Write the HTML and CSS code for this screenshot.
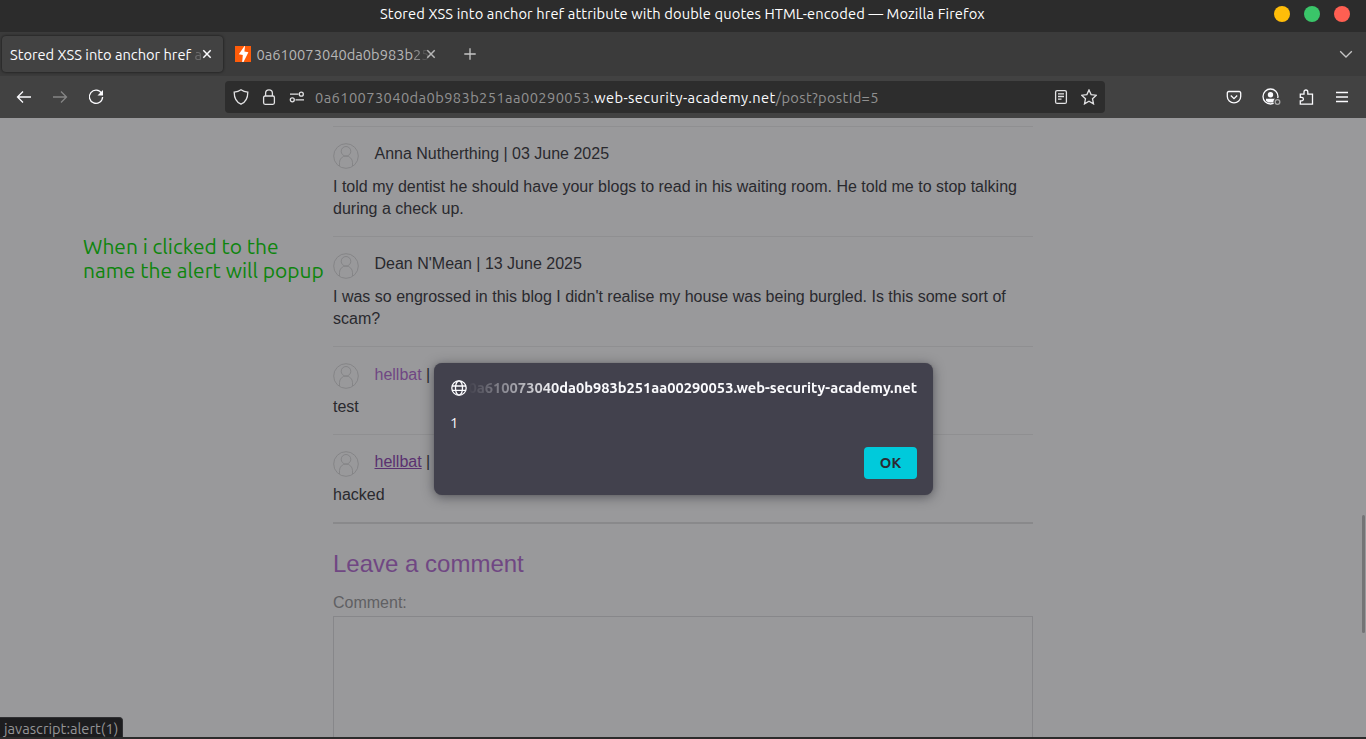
FILE: index.html
```html
<!DOCTYPE html>
<html lang="en">
<head>
<meta charset="utf-8">
<title>Stored XSS into anchor href attribute with double quotes HTML-encoded</title>
<link rel="stylesheet" href="styles.css">
</head>
<body>
<svg class="defs" width="0" height="0" aria-hidden="true">
  <symbol id="avatar" viewBox="0 0 26 26">
    <circle cx="13" cy="13" r="12.3"/>
    <circle cx="13" cy="8.3" r="4.8"/>
    <path d="M6.5 23v-3.5a6.5 6.5 0 0 1 13 0V23"/>
  </symbol>
</svg>
<div class="window">
  <header class="titlebar">
    <span class="window-title">Stored XSS into anchor href attribute with double quotes HTML-encoded — Mozilla Firefox</span>
    <div class="window-buttons"><i class="dot yellow"></i><i class="dot green"></i><i class="dot red"></i></div>
  </header>
  <div class="tabs">
    <div class="tab active">
      <span class="tab-label">Stored XSS into anchor href <span class="fade">a</span></span>
      <svg class="close" viewBox="0 0 10 10"><path d="M1.3 1.3l7.4 7.4M8.7 1.3L1.3 8.7"/></svg>
    </div>
    <div class="tab">
      <svg class="favicon" viewBox="0 0 16 16"><rect width="16" height="16" fill="#ff5c0a"/><path d="M9.500 0L3.800 8.300l4 .6-.6 7.100h1.300l4.900-9.700-4-.8L10 0z" fill="#fff"/></svg>
      <span class="tab-label">0a610073040da0b983b<span class="half">2</span><span class="fade">5</span></span>
      <svg class="close" viewBox="0 0 10 10"><path d="M1.3 1.3l7.4 7.4M8.7 1.3L1.3 8.7"/></svg>
    </div>
    <svg class="new-tab" viewBox="0 0 12 12"><path d="M6 .3v11.4M.3 6h11.4"/></svg>
    <svg class="chevron" viewBox="0 0 14 9"><path d="M1.2 1.3L7 7l5.800-5.700"/></svg>
  </div>
  <nav class="toolbar">
    <div class="nav-buttons">
      <svg class="ic" viewBox="0 0 16 16"><path d="M15 8H1.800M7 2.500L1.500 8 7 13.500"/></svg>
      <svg class="ic dim" viewBox="0 0 16 16"><path d="M1 8h13.200M9 2.500L14.500 8 9 13.500"/></svg>
      <svg class="ic" viewBox="0 0 16 16"><path d="M13.600 4.300A6.600 6.600 0 1 0 14.600 8"/><path class="solid" d="M15 1v5.500H9.500z"/></svg>
    </div>
    <div class="urlbar">
      <svg class="ic light" viewBox="0 0 16 16"><path d="M8 .8C6 2.200 3.800 2.900 1.200 3.200c0 5.300 1.600 9.700 6.800 12 5.200-2.300 6.800-6.700 6.800-12C12.200 2.900 10 2.200 8 .8z"/></svg>
      <svg class="ic light" viewBox="0 0 16 16"><rect x="2.600" y="7" width="10.800" height="8.300" rx="1.500"/><path d="M4.600 7V4.200a3.400 3.400 0 0 1 6.800 0V7"/></svg>
      <svg class="ic light" viewBox="0 0 16 16"><path d="M1 5.200h8.500M6.500 10.800H15"/><circle cx="12.300" cy="5.200" r="2"/><circle cx="3.300" cy="10.800" r="2"/></svg>
      <span class="url">0a610073040da0b983b251aa00290053.<b>web-security-academy.net</b><span class="path">/post?postId=5</span></span>
      <svg class="ic light reader" viewBox="0 0 16 16"><rect x="2.600" y="1.600" width="10.800" height="12.800" rx="1.500"/><path d="M5 4.800h6M5 7.500h6M5 10.200h3.500"/></svg>
      <svg class="ic light" viewBox="0 0 16 16"><path d="M8 .9l2.100 4.700 5.200.6-3.800 3.500 1 5.200L8 12.300l-4.500 2.600 1-5.200L.7 6.200l5.200-.6z"/></svg>
    </div>
    <div class="tools">
      <svg class="ic" viewBox="0 0 16 16"><path d="M2.800 2.500h10.400a1.500 1.500 0 0 1 1.500 1.500v3.500a6.700 6.300 0 0 1-13.400 0V4a1.500 1.500 0 0 1 1.500-1.500z"/><path d="M4.800 6.500L8 9.600l3.200-3.100"/></svg>
      <svg class="account" viewBox="0 0 19 18"><circle cx="8.500" cy="8.500" r="7.500"/><circle class="solid" cx="8.500" cy="6.700" r="2.700"/><path class="solid" d="M4 10.800h9v1.500l-2 2.200H6.300L4 12.800z"/><circle class="halo" cx="15.500" cy="14" r="4"/><circle class="badge" cx="15.500" cy="14" r="2.300"/></svg>
      <svg class="ic" viewBox="0 0 16 16"><path d="M2.300 5.200h3.700V2.900a1.900 1.900 0 0 1 3.800 0v2.300h4.700v9.900H2.300v-3.200h1.300a1.800 1.800 0 0 0 0-3.600H2.300z"/></svg>
      <svg class="ic" viewBox="0 0 16 16"><path d="M2 3.500h12M2 8h12M2 12.500h12"/></svg>
    </div>
  </nav>
  <main class="page">
    <div class="content">
      <section class="comment">
        <div class="author"><svg class="avatar raised"><use href="#avatar"/></svg><span>Anna Nutherthing | 03 June 2025</span></div>
        <p>I told my dentist he should have your blogs to read in his waiting room. He told me to stop talking during a check up.</p>
      </section>
      <section class="comment">
        <div class="author"><svg class="avatar raised"><use href="#avatar"/></svg><span>Dean N'Mean | 13 June 2025</span></div>
        <p>I was so engrossed in this blog I didn't realise my house was being burgled. Is this some sort of scam?</p>
      </section>
      <section class="comment">
        <div class="author"><svg class="avatar"><use href="#avatar"/></svg><span class="lower"><a class="name">hellbat</a> |</span></div>
        <p>test</p>
      </section>
      <section class="comment">
        <div class="author"><svg class="avatar raised"><use href="#avatar"/></svg><span><a class="name hovered">hellbat</a> |</span></div>
        <p>hacked</p>
      </section>
      <section class="reply">
        <h2>Leave a comment</h2>
        <label>Comment:</label>
        <div class="textarea"></div>
      </section>
    </div>
    <div class="note"><div>When i clicked to the</div><div>name the alert will popup</div></div>
    <div class="scroll-thumb"></div>
    <div class="status">javascript:alert(1)</div>
    <div class="dialog">
      <div class="dialog-head">
        <svg class="globe" viewBox="0 0 16 16"><circle cx="8" cy="8" r="7.200"/><ellipse cx="8" cy="8" rx="3.500" ry="7.200"/><path d="M1 6h14M1 10.300h14"/></svg>
        <div class="origin"><span>0a610073040da0b983b251aa00290053.web-security-academy.net</span></div>
      </div>
      <div class="message">1</div>
      <div class="actions"><button class="ok">OK</button></div>
    </div>
  </main>
</div>
</body>
</html>
```
FILE: styles.css
```css
* { box-sizing: border-box; }
body { margin: 0; overflow: hidden; font-family: Ubuntu, "Noto Sans", sans-serif; }
.defs { position: absolute; }
svg { fill: none; stroke: #fbfbfe; stroke-width: 1.3; flex: none; }
.solid { fill: #fbfbfe; stroke: none; }
.window { width: 1366px; height: 739px; display: flex; flex-direction: column; background: #2b2b2b; }

.titlebar { height: 32px; flex: none; display: grid; grid-template-columns: 380px 1fr auto; padding-right: 16px; align-items: center; background: #2c2c2c; color: #fff; font-size: 14.67px; letter-spacing: .12px; }
.window-title { grid-column: 2; white-space: nowrap; line-height: 20px; padding-bottom: 4px; }
.window-buttons { display: flex; gap: 14px; padding-bottom: 4px; }
.dot { width: 16px; height: 16px; border-radius: 50%; }
.yellow { background: #ffbd09; }
.green { background: #3ac569; }
.red { background: #ff5f52; }

.tabs { height: 44px; flex: none; display: flex; align-items: center; padding: 0 13px 0 2px; background: #3b3b3b; color: #b6b6b6; font-size: 14.67px; }
.tab { height: 36px; width: 221px; flex: none; display: flex; align-items: center; padding: 0 11px 0 8px; border-radius: 4px; }
.tab + .tab { padding: 0 13px 0 12px; width: 226px; }
.tab.active { background: #424242; color: #fbfbfe; box-shadow: 0 0 3px rgba(0,0,0,.7); }
.tab-label { white-space: nowrap; flex: 1; min-width: 0; padding-top: 1px; }
.half { opacity: .65; }
.fade { opacity: .22; }
.close { width: 10px; height: 10px; stroke-width: 1.5; }
.tab:not(.active) .close { stroke: #b6b6b6; }
.favicon { width: 16px; height: 16px; margin-right: 5.500px; stroke: none; }
.new-tab { width: 12px; height: 12px; margin-left: 15px; stroke: #c6c6c6; }
.chevron { width: 14px; height: 9px; margin-left: auto; stroke: #c6c6c6; }

.toolbar { height: 42px; flex: none; display: flex; align-items: center; background: #424242; padding: 0 16px; }
.nav-buttons { display: flex; gap: 20px; width: 209px; }
.ic { width: 16px; height: 16px; }
.dim { stroke: #858585; }
.light { stroke: #e2e2e4; }
.urlbar { width: 880px; height: 32px; display: flex; align-items: center; gap: 12px; padding: 0 8px; border-radius: 4px; background: #2d2d2d; color: #919191; font-size: 14.67px; letter-spacing: .4px; }
.url { white-space: nowrap; margin-left: -2px; }
.url b { font-weight: 400; color: #fbfbfe; }
.path { letter-spacing: .33px; }
.reader { margin-left: auto; }
.tools { margin-left: auto; display: flex; align-items: center; gap: 20px; }
.account { width: 19px; height: 18px; margin-right: -3px; }
.halo { fill: #424242; stroke: none; }
.badge { stroke: #a8a8a8; }

.page { position: relative; height: 619px; flex: none; overflow: hidden; background: #99999b; }
.content { width: 700px; margin: 8px auto 0; color: #29292e; font: 16px/22px Arial, "Liberation Sans", sans-serif; }
.comment { border-top: 1px solid #8f8f91; padding: 16px 0 16px; }
.comment p { margin: 0; }
.author { display: flex; gap: 15.500px; height: 33px; }
.lower { padding-top: 1px; }
.avatar { width: 26px; height: 26px; stroke: #828284; stroke-width: .9; }
.raised { margin-top: -.5px; }
.name { color: #704783; }
.hovered { color: #5a3170; text-decoration: underline; }
.reply { border-top: 2px solid #89898b; }
.reply h2 { margin: 25px 0 11px; font-size: 24px; line-height: 30px; font-weight: 400; color: #704783; }
.reply label { display: block; height: 26px; line-height: 26px; color: #606063; }
.textarea { height: 160px; border: 1px solid #87878a; }

.note { position: absolute; left: 83px; top: 116px; color: #0d850d; font-size: 20.97px; line-height: 24px; white-space: nowrap; }
.scroll-thumb { position: absolute; left: 1362px; top: 397px; width: 3px; height: 118px; border-radius: 2px; background: #747476; }
.status { position: absolute; left: 0; bottom: 0; height: 20px; width: 123px; padding-left: 4px; background: #1d1d1f; border: solid #303033; border-width: 1px 1px 0 0; border-top-right-radius: 4px; color: #949496; font-size: 14.67px; line-height: 22px; white-space: nowrap; }

.dialog { position: absolute; left: 434px; top: 245px; width: 499px; height: 132px; padding: 16px; display: flex; flex-direction: column; border-radius: 8px; background: #42414d; color: #fbfbfe; font-size: 14.67px; box-shadow: 0 0 1px rgba(90,90,95,.8), 0 2px 12px rgba(40,40,48,.6); }
.dialog-head { display: flex; align-items: center; gap: 1px; height: 17px; }
.globe { width: 16px; height: 16px; margin-left: .5px; }
.origin { flex: 1; display: flex; justify-content: flex-end; white-space: nowrap; font-weight: 600; line-height: 22px; -webkit-mask-image: linear-gradient(to right, transparent, #000 90px); mask-image: linear-gradient(to right, transparent, #000 90px); }
.message { height: 20px; margin-top: 17px; line-height: 20px; }
.actions { margin-top: auto; display: flex; justify-content: flex-end; }
.ok { width: 53px; height: 32px; padding: 0; border: 0; border-radius: 4px; background: #00cadb; color: #2b2a33; font: 700 14.67px/32px Ubuntu, "Noto Sans", sans-serif; }
```
